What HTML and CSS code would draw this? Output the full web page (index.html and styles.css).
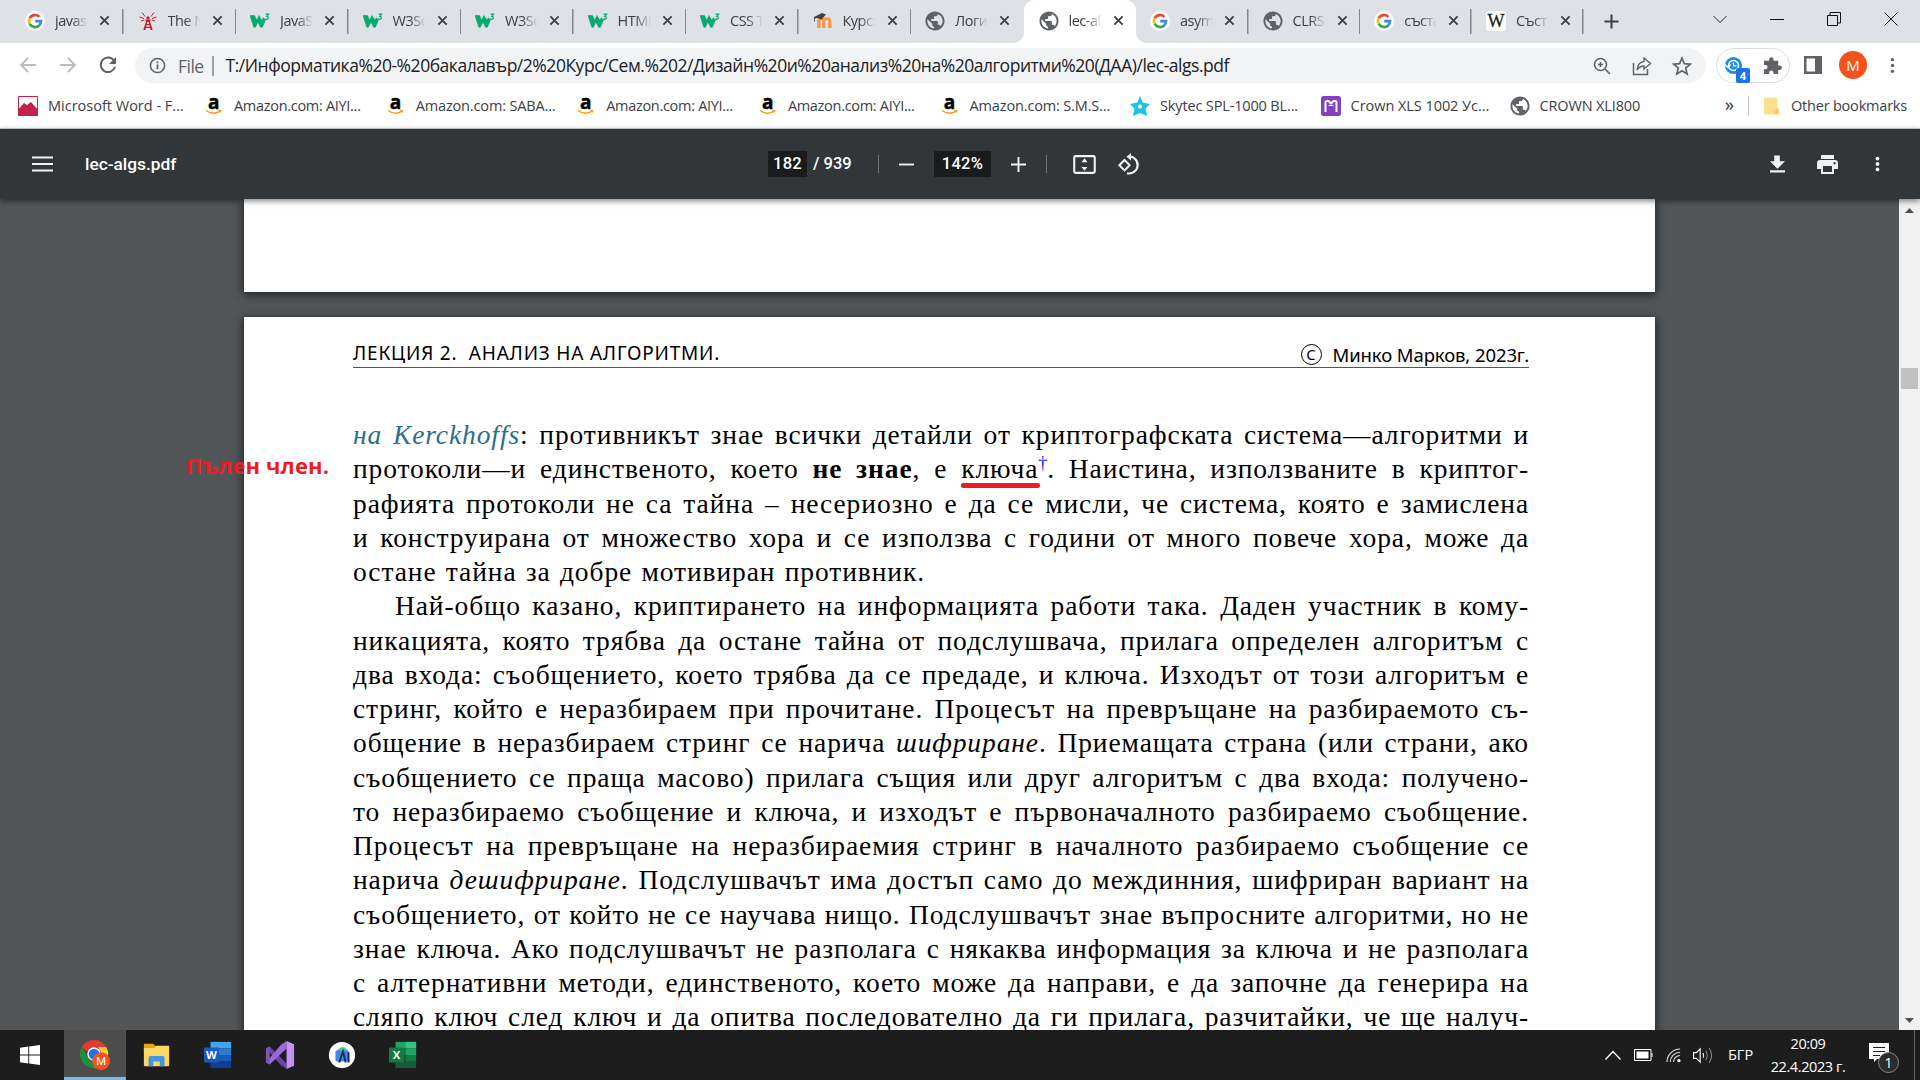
FILE: index.html
```html
<!DOCTYPE html>
<html lang="bg">
<head>
<meta charset="utf-8">
<title>lec-algs.pdf</title>
<link rel="stylesheet" href="styles.css">
</head>
<body>
<svg class="defs" width="0" height="0">
  <symbol id="google" viewBox="0 0 20 20"><circle cx="10" cy="10" r="10" fill="#fff"/><g fill="none" stroke-width="2.700"><path d="M14.400 5.900A6 6 0 0 0 4.700 7.200" stroke="#ea4335"/><path d="M4.700 7.200a6 6 0 0 0 0 5.600" stroke="#fbbc05"/><path d="M4.700 12.800a6 6 0 0 0 9.400 1.600" stroke="#34a853"/><path d="M14.100 14.400A6 6 0 0 0 16 10.200h-5.800" stroke="#4285f4"/></g></symbol>
  <symbol id="globe" viewBox="1.500 1.500 21 21"><path d="M12 2C6.480 2 2 6.480 2 12s4.480 10 10 10 10-4.480 10-10S17.520 2 12 2zm-1 17.930c-3.950-.49-7-3.850-7-7.930 0-.62.08-1.210.21-1.790L9 15v1c0 1.100.9 2 2 2v1.930zm6.900-2.540c-.26-.81-1-1.390-1.900-1.390h-1v-3c0-.55-.45-1-1-1H8v-2h2c.55 0 1-.45 1-1V7h2c1.100 0 2-.9 2-2v-.41c2.930 1.190 5 4.060 5 7.410 0 2.080-.8 3.970-2.100 5.390z" fill="#5f6368"/></symbol>
  <symbol id="w3" viewBox="0 0 20 20"><path d="M0 4.500h4.500l2.200 4.800L9 4.500l2.800 4.800 1.600-2.600 2 2.600-3 6.900H10.500L8 11l-2.600 5.200H3.800z" fill="#04aa6d" stroke="#04aa6d" stroke-width=".6"/><path d="M15.500 3.200h3l-1.700 2.100c2 0 2.200 3 0 3.100-.7 0-1.200-.2-1.600-.7" fill="none" stroke="#04aa6d" stroke-width="1.200"/></symbol>
  <symbol id="tower" viewBox="0 0 20 20"><path d="M7.500 8.500h5v1.500h-.6l2.800 9h-2.200l-.5-2H8l-.5 2H5.300l2.800-9h-.6zM9.300 11l-.5 2h2.400l-.5-2zM8.500 14.200l-.3 1.600h3.600l-.3-1.600z" fill="#c1272d" fill-rule="evenodd"/><circle cx="10" cy="7" r="1.700" fill="#c1272d"/><path d="M7 5.500L4 1.500M13 5.500l3-4M6 7.500l-4.500-1.500M14 7.500l4.500-1.500M6.300 9L3 10M13.700 9l3.300 1" stroke="#c1272d"/></symbol>
  <symbol id="moodle" viewBox="0 0 20 20"><path d="M5.800 17V10c0-3 5-3 5 0v7m0-7c0-3 6-3 6 0v7" fill="none" stroke="#f79646" stroke-width="3.200"/><path d="M1 6l8-4 4 1.500L8.500 8.500 4 7 2 7.500v3h-.7z" fill="#4a3f38"/></symbol>
  <symbol id="smile" viewBox="0 0 20 20"><path d="M2 14.500q7 5 14 .7" fill="none" stroke="#f90" stroke-width="1.500"/><path d="M14 14.200h3l-.7 2.500" fill="none" stroke="#f90"/></symbol>
  <symbol id="close" viewBox="0 0 12 12"><path d="M1.500 1.500l9 9m0-9l-9 9" stroke="#3c4043" stroke-width="2"/></symbol>
</svg>

<header class="tabstrip">
  <div class="tab"><svg><use href="#google"/></svg><span>javascript</span><svg class="x"><use href="#close"/></svg></div>
  <div class="tab"><svg><use href="#tower"/></svg><span>The Net</span><svg class="x"><use href="#close"/></svg></div>
  <div class="tab"><svg><use href="#w3"/></svg><span>JavaScript</span><svg class="x"><use href="#close"/></svg></div>
  <div class="tab"><svg><use href="#w3"/></svg><span>W3Schools</span><svg class="x"><use href="#close"/></svg></div>
  <div class="tab"><svg><use href="#w3"/></svg><span>W3Schools</span><svg class="x"><use href="#close"/></svg></div>
  <div class="tab"><svg><use href="#w3"/></svg><span>HTML</span><svg class="x"><use href="#close"/></svg></div>
  <div class="tab"><svg><use href="#w3"/></svg><span>CSS Tutorial</span><svg class="x"><use href="#close"/></svg></div>
  <div class="tab"><svg><use href="#moodle"/></svg><span>Курс:</span><svg class="x"><use href="#close"/></svg></div>
  <div class="tab plain"><svg><use href="#globe"/></svg><span>Логика</span><svg class="x"><use href="#close"/></svg></div>
  <div class="tab active"><svg><use href="#globe"/></svg><span>lec-algs</span><svg class="x"><use href="#close"/></svg></div>
  <div class="tab"><svg><use href="#google"/></svg><span>asymptotic</span><svg class="x"><use href="#close"/></svg></div>
  <div class="tab late"><svg><use href="#globe"/></svg><span>CLRS</span><svg class="x"><use href="#close"/></svg></div>
  <div class="tab late"><svg><use href="#google"/></svg><span>съставяне</span><svg class="x"><use href="#close"/></svg></div>
  <div class="tab late"><svg viewBox="0 0 20 20"><rect width="20" height="20" rx="3" fill="#fff"/><text x="10" y="15.500" text-anchor="middle" class="wiki-w">W</text></svg><span>Съст</span><svg class="x"><use href="#close"/></svg></div>
  <svg class="newtab" viewBox="0 0 16 16"><path d="M8 .5v15M.5 8h15" stroke="#3c4043" stroke-width="2.200"/></svg>
  <div class="winbtns">
    <svg viewBox="0 0 14 14"><path d="M.5 4L7 10.500 13.500 4" fill="none" stroke="#222"/></svg>
    <svg viewBox="0 0 14 14"><path d="M0 7.500h14" stroke="#111"/></svg>
    <svg viewBox="0 0 14 14"><path d="M.5 3.500h10v10H.5zM3 3V.5h10.500V11H11" fill="none" stroke="#111"/></svg>
    <svg viewBox="0 0 14 14"><path d="M.5 .5l13 13m0-13l-13 13" stroke="#111"/></svg>
  </div>
</header>

<nav class="addressbar">
  <svg class="nav" viewBox="0 0 18 18"><path d="M17 9H2m7-7L2 9l7 7" fill="none" stroke="#babcbe" stroke-width="1.900"/></svg>
  <svg class="nav" viewBox="0 0 18 18"><path d="M1 9h15M9 2l7 7-7 7" fill="none" stroke="#babcbe" stroke-width="1.900"/></svg>
  <svg class="nav" viewBox="0 0 18 18"><path d="M15 4.500A7.300 7.300 0 1 0 16 11" fill="none" stroke="#5f6368" stroke-width="2"/><path d="M17 1v7h-7z" fill="#5f6368"/></svg>
  <div class="omnibox">
    <svg class="info" viewBox="0 0 18 18"><circle cx="9" cy="9" r="7.500" fill="none" stroke="#5f6368" stroke-width="1.600"/><path d="M9 8v5M9 4.700v1.800" stroke="#5f6368" stroke-width="1.900"/></svg>
    <span class="scheme">File</span><i></i>
    <span class="url">T:/Информатика%20-%20бакалавър/2%20Курс/Сем.%202/Дизайн%20и%20анализ%20на%20алгоритми%20(ДАА)/lec-algs.pdf</span>
    <div class="actions">
      <svg viewBox="0 0 20 20"><circle cx="8.500" cy="8.500" r="6" fill="none" stroke="#5f6368" stroke-width="1.600"/><path d="M13 13l5 5M8.500 6v5M6 8.500h5" stroke="#5f6368" stroke-width="1.600"/></svg>
      <svg viewBox="0 0 20 20"><path d="M1.500 7v11.500h14V13" fill="none" stroke="#5f6368" stroke-width="1.500"/><path d="M12 2l6.500 5.500L12 13v-3c-3 0-5 1-7 4 .5-5 3-8 7-8.500z" fill="none" stroke="#5f6368" stroke-width="1.400"/></svg>
      <svg viewBox="0 0 20 20"><path d="M10 2l2.300 5.600 6 .5-4.600 4 1.400 5.900-5.100-3.200L4.900 18l1.400-5.900-4.600-4 6-.5z" fill="none" stroke="#5f6368" stroke-width="1.700"/></svg>
    </div>
  </div>
  <div class="extensions">
    <div class="ext"><svg viewBox="0 0 20 20"><circle cx="10" cy="10" r="9" fill="#1a8fe8"/><circle cx="10" cy="10" r="5.300" fill="none" stroke="#fff" stroke-width="1.600"/><path d="M10 7v3.500h3M1 9l3 3 3-3" fill="none" stroke="#fff" stroke-width="1.300"/></svg><b>4</b></div>
    <svg viewBox="0 0 20 20"><path d="M1 5h5.500V3.500a2.300 2.300 0 0 1 4.600 0V5H16v5h1.500a2.400 2.400 0 0 1 0 4.800H16V19h-5v-1.500a2.300 2.300 0 0 0-4.600 0V19H1v-5h1.500a2.300 2.300 0 0 0 0-4.600H1z" fill="#5f6368"/></svg>
  </div>
  <svg class="panel" viewBox="0 0 18 18"><path d="M0 0h18v18H0zM2.500 2.500v13H11v-13z" fill="#5f6368" fill-rule="evenodd"/></svg>
  <span class="avatar">M</span>
  <svg class="dots" viewBox="0 0 6 18"><g fill="#5f6368"><circle cx="3" cy="2" r="2"/><circle cx="3" cy="9" r="2"/><circle cx="3" cy="16" r="2"/></g></svg>
</nav>

<div class="bookmarks">
  <div class="bm w1"><svg viewBox="0 0 20 20"><path d="M.5 .5h19v19H.5z" fill="#fff" stroke="#c2214b"/><path d="M0 14l6-7 3 2 4-3 7 8v6H0z" fill="#c2214b"/></svg><span>Microsoft Word - F...</span></div>
  <div class="bm w2 amz"><svg viewBox="0 0 20 20"><text x="9.500" y="13" text-anchor="middle" class="amazon-a">a</text><use href="#smile"/></svg><span>Amazon.com: AIYI...</span></div>
  <div class="bm w3"><svg viewBox="0 0 20 20"><text x="9.500" y="13" text-anchor="middle" class="amazon-a">a</text><use href="#smile"/></svg><span>Amazon.com: SABA...</span></div>
  <div class="bm w2 amz"><svg viewBox="0 0 20 20"><text x="9.500" y="13" text-anchor="middle" class="amazon-a">a</text><use href="#smile"/></svg><span>Amazon.com: AIYI...</span></div>
  <div class="bm w2 amz"><svg viewBox="0 0 20 20"><text x="9.500" y="13" text-anchor="middle" class="amazon-a">a</text><use href="#smile"/></svg><span>Amazon.com: AIYI...</span></div>
  <div class="bm w3"><svg viewBox="0 0 20 20"><text x="9.500" y="13" text-anchor="middle" class="amazon-a">a</text><use href="#smile"/></svg><span>Amazon.com: S.M.S...</span></div>
  <div class="bm w3"><svg viewBox="0 0 20 20"><path d="M10 0l2.700 6.500L20 8l-4.500 4.500L17 20l-7-3-7 3 1.500-7.500L0 8l7.300-1.500z" fill="#1cc3e4"/><circle cx="10" cy="10.500" r="2" fill="#fff"/></svg><span>Skytec SPL-1000 BL...</span></div>
  <div class="bm w4"><svg viewBox="0 0 20 20"><rect width="20" height="20" rx="2.500" fill="#8540c0"/><path d="M4.500 16V6.500q0-1.500 1.500-1.500h1.500L10 7.500 12.500 5H14q1.500 0 1.500 1.500V16" fill="none" stroke="#fff" stroke-width="2"/><path d="M7.500 9.500h5" stroke="#fff"/></svg><span>Crown XLS 1002 Ус...</span></div>
  <div class="bm"><svg><use href="#globe"/></svg><span>CROWN XLI800</span></div>
  <div class="others"><span class="more">»</span><i></i><svg viewBox="0 0 17 20"><path d="M0 2q0-1.500 1.500-1.500h12Q15 .5 15 2v10l1.500 2v4q0 1.500-1.500 1.500H1.500Q0 19.500 0 18z" fill="#ffe08a"/><path d="M15 12l1.500 2v5H12v-4z" fill="#f9cf52"/></svg><span>Other bookmarks</span></div>
</div>

<div class="pdfbar">
  <svg class="menu" viewBox="0 0 21 16"><path d="M0 1.500h21M0 8h21M0 14.500h21" stroke="#f1f1f1" stroke-width="2.200"/></svg>
  <span class="name">lec-algs.pdf</span>
  <div class="pager"><span class="field">182</span><span class="total">/ 939</span></div>
  <i class="s1"></i>
  <svg class="minus" viewBox="0 0 16 16"><path d="M0 8h16" stroke="#f1f1f1" stroke-width="2"/></svg>
  <span class="field zoom">142%</span>
  <svg class="plus" viewBox="0 0 16 16"><path d="M0 8h16M8 0v16" stroke="#f1f1f1" stroke-width="2"/></svg>
  <i class="s2"></i>
  <svg class="fit" viewBox="0 0 24 20"><rect x="1.200" y="1.200" width="21.600" height="17.600" rx="1.500" fill="none" stroke="#f1f1f1" stroke-width="2.200"/><path d="M12 3.500l3.200 4H8.800zM12 16.500l3.200-4H8.800z" fill="#f1f1f1"/></svg>
  <svg class="rotate" viewBox="0 0 22 22"><path d="M6.500 7l5.200 5.200-5.200 5.200-5.200-5.200z" fill="none" stroke="#f1f1f1" stroke-width="2"/><path d="M10.500 3.500a8.500 8.500 0 1 1-1.500 16.700" fill="none" stroke="#f1f1f1" stroke-width="2.200"/><path d="M13 0v7.500L8.500 3.800z" fill="#f1f1f1"/></svg>
  <div class="right">
    <svg viewBox="0 0 16 18"><path d="M4.500 0h6v6H16l-8 8-8-8h4.500zM0 15.600h16V18H0z" fill="#f1f1f1"/></svg>
    <svg class="print" viewBox="0 0 21 19"><path d="M4 0h13v4H4zM3 5h15q3 0 3 3v6h-4v5H4v-5H0V8q0-3 3-3zM6 11v6h9v-6zM17.500 7a1.200 1.200 0 1 0 .1 0z" fill="#f1f1f1" fill-rule="evenodd"/></svg>
    <svg class="kebab" viewBox="0 0 6 18"><g fill="#f1f1f1"><circle cx="3" cy="2.500" r="2.300"/><circle cx="3" cy="9" r="2.300"/><circle cx="3" cy="15.500" r="2.300"/></g></svg>
  </div>
</div>

<main class="viewer">
  <div class="sheets">
    <section class="sheet previous"></section>
    <section class="sheet">
      <div class="running"><span class="lecture">ЛЕКЦИЯ 2.&nbsp; АНАЛИЗ НА АЛГОРИТМИ.</span><span class="author"><span class="copy">C</span>Минко Марков, 2023г.</span></div>
      <div class="body">
        <p><em class="link">на Kerckhoffs</em>: противникът знае всички детайли от криптографската система—алгоритми и</p>
        <p>протоколи—и единственото, което <b>не знае</b>, е <span class="noted"><span class="marked">ключа</span><sup>†</sup>.</span> Наистина, използваните в криптог-</p>
        <p>рафията протоколи не са тайна – несериозно е да се мисли, че система, която е замислена</p>
        <p>и конструирана от множество хора и се използва с години от много повече хора, може да</p>
        <p class="last">остане тайна за добре мотивиран противник.</p>
        <p class="first">Най-общо казано, криптирането на информацията работи така. Даден участник в кому-</p>
        <p>никацията, която трябва да остане тайна от подслушвача, прилага определен алгоритъм с</p>
        <p>два входа: съобщението, което трябва да се предаде, и ключа. Изходът от този алгоритъм е</p>
        <p>стринг, който е неразбираем при прочитане. Процесът на превръщане на разбираемото съ-</p>
        <p>общение в неразбираем стринг се нарича <em>шифриране</em>. Приемащата страна (или страни, ако</p>
        <p>съобщението се праща масово) прилага същия или друг алгоритъм с два входа: получено-</p>
        <p>то неразбираемо съобщение и ключа, и изходът е първоначалното разбираемо съобщение.</p>
        <p>Процесът на превръщане на неразбираемия стринг в началното разбираемо съобщение се</p>
        <p>нарича <em>дешифриране</em>. Подслушвачът има достъп само до междинния, шифриран вариант на</p>
        <p>съобщението, от който не се научава нищо. Подслушвачът знае въпросните алгоритми, но не</p>
        <p>знае ключа. Ако подслушвачът не разполага с някаква информация за ключа и не разполага</p>
        <p>с алтернативни методи, единственото, което може да направи, е да започне да генерира на</p>
        <p>сляпо ключ след ключ и да опитва последователно да ги прилага, разчитайки, че ще налуч-</p>
      </div>
      <div class="note">Пълен член.</div>
    </section>
  </div>
  <div class="scrollbar">
    <svg viewBox="0 0 9 5"><path d="M0 5l4.500-5L9 5z" fill="#505050"/></svg>
    <div class="thumb"></div>
    <svg viewBox="0 0 9 5"><path d="M0 0l4.500 5L9 0z" fill="#505050"/></svg>
  </div>
</main>

<footer class="taskbar">
  <div class="app start"><svg viewBox="0 0 20 20"><path d="M0 2.800L8.300 1.600v8H0zM9.200 1.500L20 0v9.600H9.200zM0 10.500h8.300v8L0 17.300zM9.200 10.500H20V20L9.200 18.600z" fill="#fff"/></svg></div>
  <div class="app current"><svg class="wide" viewBox="0 0 32 32"><path d="M15 0a15 15 0 0 1 13 7.500H15a7.500 7.500 0 0 0-7 5L2 7.500A15 15 0 0 1 15 0z" fill="#e33b2e"/><path d="M28 7.500A15 15 0 0 1 15 30l7-12q1.500-6-3-10.500z" fill="#fcc934"/><path d="M2 7.500A15 15 0 0 0 15 30l5.500-9q-8 3-12-2z" fill="#1e8e3e"/><circle cx="15" cy="15" r="7.200" fill="#fff"/><circle cx="15" cy="15" r="5.800" fill="#1a73e8"/><circle cx="22.500" cy="22.500" r="9.500" fill="#f4511e"/><text x="22.500" y="26.500" text-anchor="middle" class="badge-m">M</text></svg></div>
  <div class="app"><svg class="wide" viewBox="0 0 32 32"><path d="M2 5q0-1 1-1h9l3 3-3 4H2z" fill="#e8a317"/><path d="M2 8.500h11L15 6h14v21q0 1-1 1H3q-1 0-1-1z" fill="#fdd663"/><path d="M7 28v-9q0-2 2-2h13q2 0 2 2v9h-5v-5h-7v5z" fill="#3f97e0"/></svg></div>
  <div class="app"><svg class="wide" viewBox="0 0 32 32"><path d="M8 2h22v7H8z" fill="#41a5ee"/><path d="M8 9h22v7H8z" fill="#2b7cd3"/><path d="M8 16h22v7H8z" fill="#185abd"/><path d="M8 23h22v7H8z" fill="#103f91"/><rect x="1" y="8" width="16" height="16" rx="1" fill="#185abd"/><text x="9" y="20.500" text-anchor="middle" class="office">W</text></svg></div>
  <div class="app"><svg class="wide" viewBox="0 0 32 32"><path d="M1 9l4-2 18 18v6L17 27z" fill="#6b45a8"/><path d="M1 24l4 2 18-17V1l-6 4z" fill="#9a6bdc"/><path d="M23 1l8 3.500v23L23 31z" fill="#c492f5"/><path d="M1 9l4-2v19l-4-2z" fill="#7f55bd"/></svg></div>
  <div class="app"><svg class="wide" viewBox="0 0 32 32"><circle cx="16" cy="16" r="14" fill="#fff"/><path d="M11 11q6-7 11 0v5H11z" fill="#3ddc84"/><rect x="9" y="11" width="14" height="12" rx="2" fill="#4285f4"/><path d="M13 24l4-12 3 12M23 13v11" fill="none" stroke="#073042" stroke-width="2"/></svg></div>
  <div class="app"><svg class="wide" viewBox="0 0 32 32"><path d="M8 2h22v7H8z" fill="#21a366"/><path d="M19 2h11v7H19z" fill="#33c481"/><path d="M8 9h22v7H8z" fill="#107c41"/><path d="M19 9h11v7H19z" fill="#21a366"/><path d="M8 16h22v7H8z" fill="#185c37"/><path d="M19 16h11v7H19z" fill="#107c41"/><path d="M8 23h22v7H8z" fill="#185c37"/><rect x="1" y="8" width="16" height="16" rx="1" fill="#107c41"/><text x="9" y="20.500" text-anchor="middle" class="office">X</text></svg></div>
  <div class="tray">
    <svg class="t1" viewBox="0 0 16 10"><path d="M.5 9.500L8 1.500l7.500 8" fill="none" stroke="#fff" stroke-width="1.400"/></svg>
    <svg class="t2" viewBox="0 0 19 12"><path d="M.5 .5h16.500v11H.5zM18 4v4" fill="none" stroke="#fff"/><path d="M2.500 2.500h12v7h-12z" fill="#fff"/></svg>
    <svg class="t3" viewBox="0 0 17 16"><g fill="none" stroke="#ddd" stroke-width="1.200"><path d="M1 15A14 14 0 0 1 15 1"/><path d="M4.500 15A10.500 10.500 0 0 1 15 4.500"/><path d="M8 15a7 7 0 0 1 7-7"/></g><circle cx="13.700" cy="13.500" r="1.800" fill="#fff"/></svg>
    <svg class="t4" viewBox="0 0 21 18"><path d="M.5 6h3l4-4v14l-4-4h-3z" fill="none" stroke="#fff" stroke-width="1.200"/><path d="M10.500 6.500q1.500 2.500 0 5" fill="none" stroke="#fff" stroke-width="1.200"/><path d="M13.500 4q3 5 0 10M17 1q5 8 0 16" fill="none" stroke="#888" stroke-width="1.100"/></svg>
    <span class="lang">БГР</span>
    <div class="clock"><span>20:09</span><span>22.4.2023 г.</span></div>
    <svg class="notify" viewBox="0 0 32 32"><path d="M0 1h20v16H8l-3 3v-3H0z" fill="#fff"/><path d="M4 5.500h12M4 9.500h12M4 13.500h7" stroke="#1d1d1d"/><circle cx="19.500" cy="20.500" r="10" fill="#2b2b2b" stroke="#8a8a8a"/><text x="19.500" y="25.500" text-anchor="middle" class="count">1</text></svg>
    <i></i>
  </div>
</footer>
</body>
</html>
```
FILE: styles.css
```css
* { box-sizing: border-box; }
body { margin: 0; width: 1920px; height: 1080px; overflow: hidden; display: flex; flex-direction: column; background: #fff; color: #3c4043; font: 15px/20px "Open Sans", "Noto Sans", sans-serif; }
svg { display: block; flex: none; overflow: visible; }
.defs { width: 0; height: 0; overflow: hidden; position: absolute; }
p { margin: 0; }

.tabstrip { height: 43px; flex: none; background: #dee1e6; display: flex; align-items: center; padding-left: 11px; }
.tab { width: 112.5px; height: 43px; display: flex; align-items: center; padding: 0 0 2px 14px; flex: none; background: linear-gradient(#85888d, #85888d) no-repeat right 9px / 1.500px 25px; }
.tab.late { width: 111.700px; }
.tab.plain, .tab.active { background-image: none; }
.tab svg { width: 20px; height: 20px; }
.tab span { width: 34px; margin-left: 10px; overflow: hidden; white-space: nowrap; font-size: 14.500px; letter-spacing: -.5px; -webkit-mask-image: linear-gradient(90deg, #000 50%, transparent 97%); mask-image: linear-gradient(90deg, #000 50%, transparent 97%); }
.tab .x { width: 11px; height: 11px; margin-left: 10px; }
.tab.active { background: #fff; border-radius: 10px 10px 0 0; position: relative; padding-left: 15px; }
.tab.active::before, .tab.active::after { content: ""; position: absolute; bottom: 0; width: 10px; height: 10px; }
.tab.active::before { left: -10px; background: radial-gradient(circle at 0 0, transparent 9.500px, #fff 10px); }
.tab.active::after { right: -10px; background: radial-gradient(circle at 100% 0, transparent 9.500px, #fff 10px); }
.wiki-w { font: 18px "Liberation Serif", serif; fill: #222; stroke: #222; stroke-width: .3px; }
.amazon-a { font: bold 19px "Open Sans", sans-serif; fill: #000; stroke: #000; stroke-width: .5px; }
.newtab { width: 15px; height: 15px; margin-left: 20px; }
.winbtns { margin-left: auto; margin-right: 22px; display: flex; gap: 43px; align-self: flex-start; padding-top: 12px; }
.winbtns svg { width: 14px; height: 14px; }

.addressbar { height: 44px; flex: none; display: flex; align-items: flex-start; padding: 5px 0 0 19px; }
.nav { width: 18px; height: 18px; margin: 8px 22px 0 0; }
.omnibox { flex: none; width: 1571px; height: 35px; margin-left: -4px; border-radius: 18px; background: #f1f3f4; display: flex; align-items: center; padding: 0 14px; font-size: 17.500px; }
.info { width: 17px; height: 17px; }
.scheme { margin-left: 12px; width: 34px; color: #5f6368; letter-spacing: -.5px; }
.omnibox i { width: 1.500px; height: 20px; background: #9aa0a6; margin-right: 12px; }
.url { color: #202124; white-space: nowrap; letter-spacing: -.47px; position: relative; top: -1px; }
.actions { margin-left: auto; display: flex; gap: 20px; }
.actions svg { width: 20px; height: 20px; }
.extensions { width: 74px; height: 35px; margin-left: 10px; border: 1px solid #dadce0; border-radius: 18px; display: flex; align-items: center; gap: 20px; padding-left: 7px; }
.extensions svg { width: 19px; height: 19px; }
.ext { position: relative; }
.ext b { position: absolute; left: 12px; top: 12px; width: 14px; height: 15px; border-radius: 2px; background: #1a73e8; color: #fff; font-size: 11px; line-height: 15px; text-align: center; }
.panel { width: 18px; height: 18px; margin: 8px 17px 0 14px; }
.avatar { width: 28px; height: 28px; margin-top: 3px; border-radius: 50%; background: #f4511e; color: #fff; text-align: center; line-height: 28px; }
.dots { width: 5px; height: 17px; margin: 9px 0 0 23px; }

.bookmarks { height: 42px; flex: none; display: flex; align-items: flex-start; padding: 9px 13px 0 18px; border-bottom: 1px solid #d0d2d5; }
.bm { display: flex; align-items: center; gap: 10px; flex: none; white-space: nowrap; font-size: 14.500px; letter-spacing: -.15px; }
.bm svg { width: 20px; height: 20px; }
.amz { letter-spacing: -.3px; }
.w1 { width: 186px; letter-spacing: 0; }
.w2 { width: 181.700px; }
.w3 { width: 190.500px; }
.w4 { width: 189px; letter-spacing: -.05px; }
.others { margin-left: auto; display: flex; align-items: center; font-size: 14.500px; letter-spacing: -.2px; white-space: nowrap; }
.more { font-size: 19px; margin-right: 14px; position: relative; top: -2px; }
.others i { width: 1px; height: 20px; background: #c4c7cb; margin-right: 14px; }
.others svg { width: 17px; height: 18px; margin-right: 11px; }

.pdfbar { height: 70px; flex: none; background: #323639; color: #fff; display: flex; align-items: center; padding-left: 32px; box-shadow: 0 2px 6px rgba(0,0,0,.5); position: relative; z-index: 2; font: 500 16.500px/26px Roboto, sans-serif; }
.menu { width: 21px; height: 18px; }
.name { margin-left: 32px; width: 683px; font-size: 17.300px; }
.pager { display: flex; align-items: center; }
.field { width: 39px; height: 26px; background: #191b1c; text-align: center; letter-spacing: .3px; }
.total { margin-left: 6px; width: 65px; }
.pdfbar i { width: 1px; height: 18px; background: #70757a; }
.minus { width: 15px; height: 15px; margin: 0 20px; }
.zoom { width: 57px; }
.plus { width: 15px; height: 15px; margin: 0 20px; }
.fit { width: 23px; height: 19px; margin: 0 22px 0 26px; }
.rotate { width: 22px; height: 22px; }
.right { margin-left: auto; display: flex; align-items: center; padding-right: 40px; }
.right svg { width: 15px; height: 18px; }
.right .print { width: 21px; height: 19px; margin: 0 37px 0 32px; }
.right .kebab { width: 5px; }

.viewer { height: 831px; flex: none; overflow: hidden; background: #525659; display: flex; }
.sheets { width: 1899px; padding-left: 244px; display: flex; flex-direction: column; gap: 25px; }
.sheet { width: 1411px; height: 740px; flex: none; background: #fff; box-shadow: 0 2px 9px 1px rgba(0,0,0,.6); position: relative; padding: 24px 126px 0 109px; }
.previous { height: 93px; }
.running { display: flex; justify-content: space-between; height: 27px; border-bottom: 1.500px solid #555; color: #000; font: 18.500px/25px "Noto Sans", sans-serif; }
.lecture { font-size: 19px; letter-spacing: .8px; }
.author { display: flex; align-items: center; letter-spacing: -.1px; }
.copy { width: 21px; height: 21px; margin-right: 11px; border: 1.300px solid #000; border-radius: 50%; font-size: 15px; line-height: 19px; text-align: center; }
.body { padding-top: 50px; color: #000; font: 27.500px/34.250px "Liberation Serif", serif; letter-spacing: .9px; }
.body p { height: 34.250px; white-space: nowrap; text-align: justify; text-align-last: justify; }
.body .last { width: 572px; }
.body .first { padding-left: 42px; }
.link { color: #2a6f8f; }
sup { color: #1414ff; font-size: 18px; line-height: 0; vertical-align: 9px; letter-spacing: 0; }
.noted { display: inline-block; text-align: left; text-align-last: left; }
.marked { position: relative; }
.marked::after { content: ""; position: absolute; left: 0; right: -2px; bottom: -4px; height: 5px; border-radius: 2px; background: #ed1c24; }
.note { position: absolute; left: -58px; top: 133px; color: #ed1c24; font: bold 22px/30px "Open Sans", sans-serif; letter-spacing: .1px; white-space: nowrap; }
.scrollbar { width: 21px; background: #f1f1f1; display: flex; flex-direction: column; align-items: center; padding: 9px 0 7px; }
.scrollbar svg { width: 9px; height: 5px; }
.thumb { width: 17px; height: 21px; margin: 155px 0 auto; background: #c1c1c1; }

.taskbar { height: 50px; flex: none; background: #1d1d1d; display: flex; align-items: center; color: #fff; }
.app { width: 61.700px; height: 50px; display: flex; align-items: center; justify-content: center; }
.app.start { width: 64px; padding-right: 4px; }
.app svg { width: 20px; height: 20px; }
.app .wide { width: 30px; height: 30px; }
.current { background: linear-gradient(#76b9ed, #76b9ed) no-repeat bottom / 100% 3px #4c4c4c; }
.badge-m { font: 12px Roboto, sans-serif; fill: #fff; }
.office { font: bold 12px "Open Sans", sans-serif; fill: #fff; }
.tray { margin-left: auto; display: flex; align-items: center; height: 50px; font-size: 14.500px; }
.t1 { width: 16px; height: 10px; }
.t2 { width: 19px; height: 12px; margin-left: 13px; }
.t3 { width: 16px; height: 15px; margin-left: 13px; }
.t4 { width: 20px; height: 17px; margin-left: 11px; }
.lang { margin-left: 15px; width: 28px; }
.clock { width: 104px; display: flex; flex-direction: column; align-items: center; gap: 3px; line-height: 20px; letter-spacing: -.4px; white-space: nowrap; }
.notify { width: 32px; height: 32px; margin: 5px 13px 0 9px; }
.count { font: 14px "Open Sans", sans-serif; fill: #fff; }
.tray i { width: 1px; height: 50px; background: #666; margin-right: 5px; }
```
